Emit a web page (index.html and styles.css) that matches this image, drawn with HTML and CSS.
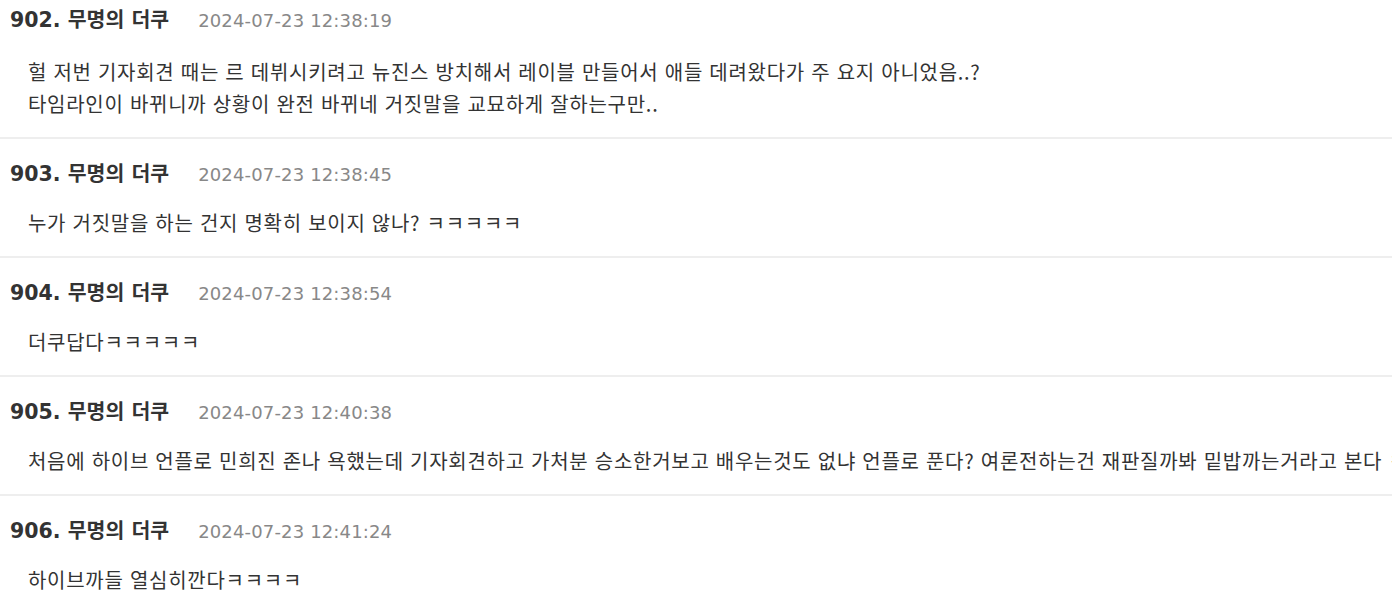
FILE: index.html
```html
<!DOCTYPE html>
<html lang="ko">
<head>
<meta charset="utf-8">
<title>댓글</title>
<link rel="stylesheet" href="styles.css">
</head>
<body>
<div class="viewport">
  <ul class="comments">
    <li class="comment comment--first">
      <div class="meta"><span class="author">902. 무명의 더쿠</span><span class="date">2024-07-23 12:38:19</span></div>
      <div class="body">헐 저번 기자회견 때는 르 데뷔시키려고 뉴진스 방치해서 레이블 만들어서 애들 데려왔다가 주 요지 아니었음..?<br>타임라인이 바뀌니까 상황이 완전 바뀌네 거짓말을 교묘하게 잘하는구만..</div>
    </li>
    <li class="comment">
      <div class="meta"><span class="author">903. 무명의 더쿠</span><span class="date">2024-07-23 12:38:45</span></div>
      <div class="body">누가 거짓말을 하는 건지 명확히 보이지 않나? ㅋㅋㅋㅋㅋ</div>
    </li>
    <li class="comment">
      <div class="meta"><span class="author">904. 무명의 더쿠</span><span class="date">2024-07-23 12:38:54</span></div>
      <div class="body">더쿠답다ㅋㅋㅋㅋㅋ</div>
    </li>
    <li class="comment">
      <div class="meta"><span class="author">905. 무명의 더쿠</span><span class="date">2024-07-23 12:40:38</span></div>
      <div class="body">처음에 하이브 언플로 민희진 존나 욕했는데 기자회견하고 가처분 승소한거보고 배우는것도 없냐 언플로 푼다? 여론전하는건 재판질까봐 밑밥까는거라고 본다 ㅋㅋ</div>
    </li>
    <li class="comment">
      <div class="meta"><span class="author">906. 무명의 더쿠</span><span class="date">2024-07-23 12:41:24</span></div>
      <div class="body">하이브까들 열심히깐다ㅋㅋㅋㅋ</div>
    </li>
  </ul>
</div>
</body>
</html>
```
FILE: styles.css
```css
html, body {
  margin: 0;
  padding: 0;
  background: #fff;
}
body {
  font-family: "Noto Sans CJK KR", "Liberation Sans", sans-serif;
  color: #333;
}
.viewport {
  width: 1392px;
  height: 602px;
  overflow: hidden;
}
.comments {
  list-style: none;
  margin: -15px 0 0 0;
  padding: 0;
}
.comment {
  border-bottom: 2px solid #eeeeee;
  padding: 20px 0 17px 0;
  white-space: nowrap;
}
.meta {
  display: flex;
  align-items: baseline;
  gap: 29px;
  padding-left: 10px;
  height: 30px;
  line-height: 30px;
}
.author {
  font-family: "DejaVu Sans", "Noto Sans CJK KR", sans-serif;
  font-size: 20.5px;
  font-weight: 700;
  color: #333;
}
.date {
  font-family: "DejaVu Sans", "Noto Sans CJK KR", sans-serif;
  font-size: 18px;
  letter-spacing: 0.15px;
  color: #888;
}
.body {
  margin-top: 18px;
  padding-left: 28px;
  font-size: 20px;
  letter-spacing: 0.72px;
  line-height: 32px;
  color: #333;
}
.comment--first .body {
  margin-top: 21px;
}
```
